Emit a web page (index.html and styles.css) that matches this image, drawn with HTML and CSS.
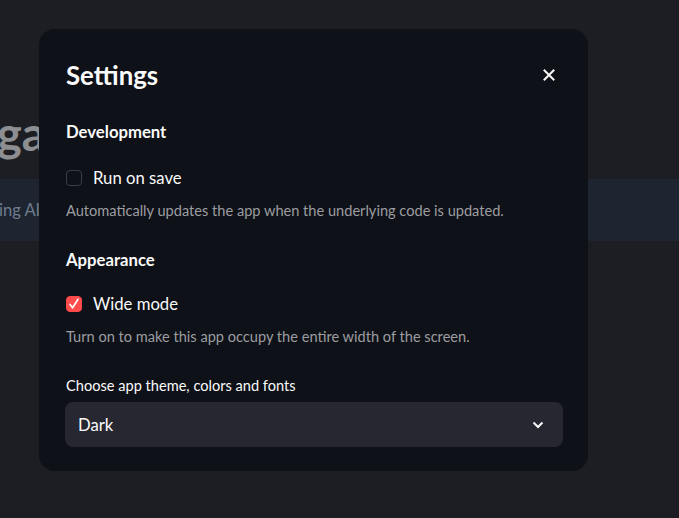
FILE: index.html
```html
<!DOCTYPE html>
<html lang="en">
<head>
<meta charset="utf-8">
<title>Settings</title>
<link rel="stylesheet" href="styles.css">
</head>
<body>
<div class="app">
  <h1 class="app-title">gation</h1>
  <div class="app-info"><span>ing AI models</span></div>
</div>

<div class="modal" role="dialog" aria-label="Settings">
  <div class="modal-head">
    <h2 class="modal-title">Settings</h2>
    <button class="close" aria-label="Close">
      <svg width="12" height="12" viewBox="0 0 12 12"><path d="M1.5 1.5 L10.5 10.5 M10.5 1.5 L1.5 10.5" stroke="#fafafa" stroke-width="2" stroke-linecap="square" fill="none"/></svg>
    </button>
  </div>

  <h3 class="section">Development</h3>
  <label class="check-row">
    <span class="box"></span>
    <span class="check-label">Run on save</span>
  </label>
  <p class="desc">Automatically updates the app when the underlying code is updated.</p>

  <h3 class="section section-2">Appearance</h3>
  <label class="check-row check-row-2">
    <span class="box box-on">
      <svg width="12" height="12" viewBox="0 0 12 12"><path d="M2 6.5 L4.6 9.8 L10 1.3" stroke="#ffffff" stroke-width="1.7" fill="none" stroke-linecap="round" stroke-linejoin="round"/></svg>
    </span>
    <span class="check-label">Wide mode</span>
  </label>
  <p class="desc">Turn on to make this app occupy the entire width of the screen.</p>

  <div class="field-label">Choose app theme, colors and fonts</div>
  <div class="select">
    <span class="select-value">Dark</span>
    <svg class="chev" width="12" height="8" viewBox="0 0 12 8"><path d="M1.5 1.5 L6 6 L10.5 1.5" stroke="#fafafa" stroke-width="2" fill="none"/></svg>
  </div>
</div>
</body>
</html>
```

FILE: styles.css
```css
* { box-sizing: border-box; }

html, body {
  margin: 0;
  padding: 0;
  width: 679px;
  height: 518px;
  overflow: hidden;
  background: #1d1e23;
  font-family: "Lato", "Noto Sans", sans-serif;
  color: #fafafa;
}

.app {
  padding-top: 98px;
}

.app-title {
  margin: 0 0 0 -3px;
  font-size: 47px;
  line-height: 70px;
  font-weight: 700;
  color: #8d8e91;
  white-space: nowrap;
}

.app-info {
  margin-top: 11px;
  height: 62px;
  background: #1e2430;
  display: flex;
  align-items: center;
  margin-left: -1px;
  font-size: 16.5px;
  color: #6f7d8f;
  white-space: nowrap;
}

.modal {
  position: absolute;
  left: 39px;
  top: 29px;
  width: 549px;
  height: 442px;
  background: #0e1117;
  border-radius: 16px;
  padding: 30px 25px 0 27px;
  display: flex;
  flex-direction: column;
}

.modal-head {
  display: flex;
  justify-content: space-between;
  align-items: center;
  height: 32px;
}

.modal-title {
  margin: 0;
  font-size: 25.8px;
  font-weight: 700;
  line-height: 32px;
}

.close {
  background: none;
  border: 0;
  padding: 0;
  margin-right: 8px;
  width: 12px;
  height: 12px;
  display: flex;
}

.section {
  margin: 29px 0 0;
  font-size: 16.7px;
  font-weight: 700;
  line-height: 24px;
}

.section-2 { margin-top: 27px; }

.check-row {
  margin-top: 22px;
  height: 24px;
  display: flex;
  align-items: center;
  gap: 11px;
}

.check-row-2 { margin-top: 20px; }

.box {
  width: 16px;
  height: 16px;
  border: 1px solid #3b3d45;
  border-radius: 4px;
  display: flex;
  align-items: center;
  justify-content: center;
}

.box-on {
  background: #ff4b4b;
  border-color: #ff4b4b;
}

.check-label {
  font-size: 16.7px;
  line-height: 24px;
}

.desc {
  margin: 10px 0 0;
  font-size: 14.6px;
  line-height: 21px;
  color: #9c9da1;
}

.field-label {
  margin-top: 28px;
  font-size: 14.6px;
  line-height: 21px;
  color: #fafafa;
}

.select {
  margin-top: 6px;
  margin-left: -1px;
  height: 45px;
  background: #262730;
  border-radius: 8px;
  display: flex;
  align-items: center;
  justify-content: space-between;
  padding: 0 19px 0 13px;
}

.select-value {
  font-size: 16.7px;
}
```
